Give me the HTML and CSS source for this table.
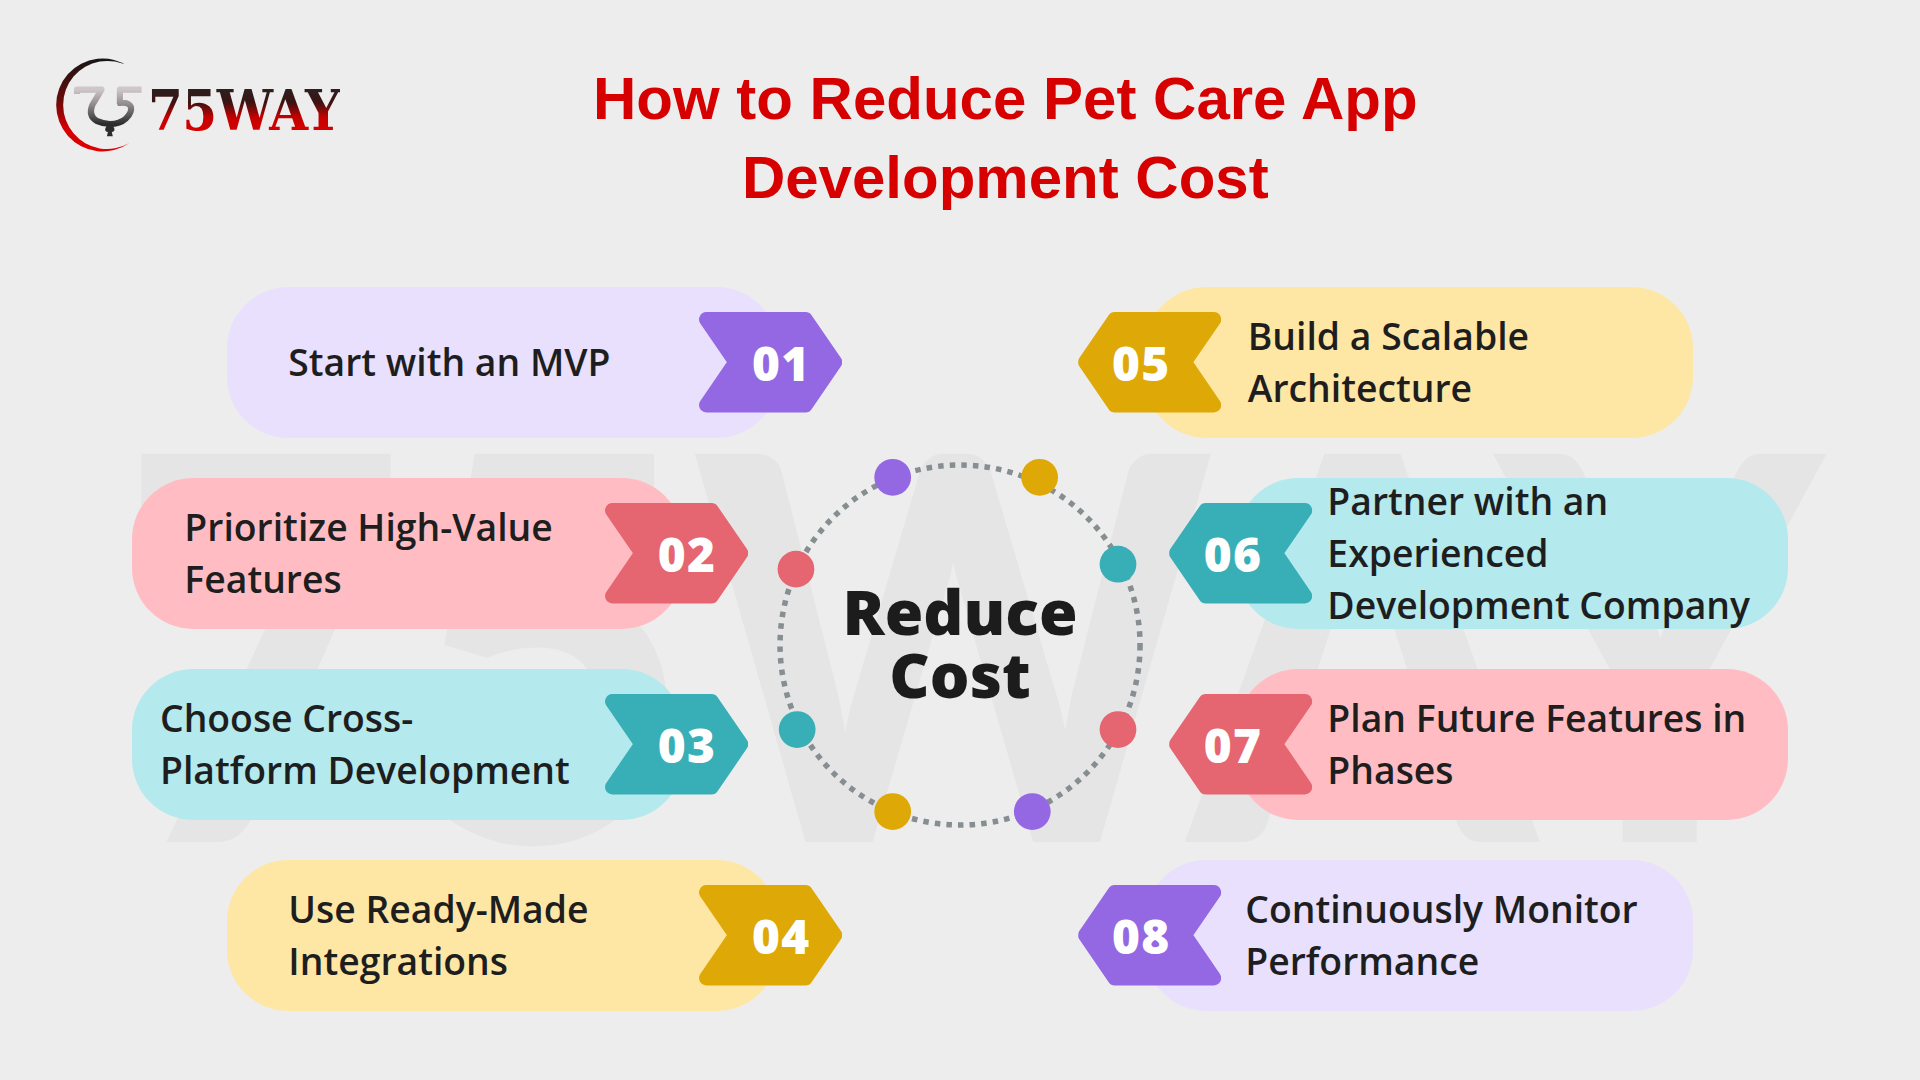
FILE: index.html
```html
<!DOCTYPE html>
<html lang="en">
<head>
<meta charset="utf-8">
<title>How to Reduce Pet Care App Development Cost</title>
<link rel="stylesheet" href="styles.css">
</head>
<body>
<div class="canvas">
  <svg class="watermark" viewBox="0 0 1568 400" width="1568" height="400" aria-hidden="true">
    <text x="98" y="388" textLength="1390" lengthAdjust="spacingAndGlyphs">75WAY</text>
  </svg>

  <header class="header">
    <div class="logo">
      <svg class="logo-mark" viewBox="0 0 76 80" width="76" height="80">
        <defs>
          <linearGradient id="ring" x1="0" y1="0" x2="0" y2="1">
            <stop offset="0" stop-color="#161616"/>
            <stop offset="0.45" stop-color="#6a0a0a"/>
            <stop offset="0.75" stop-color="#d40000"/>
            <stop offset="1" stop-color="#e00000"/>
          </linearGradient>
          <linearGradient id="emb" x1="0" y1="0" x2="0" y2="1">
            <stop offset="0" stop-color="#cfc6ca"/>
            <stop offset="0.45" stop-color="#8e888a"/>
            <stop offset="1" stop-color="#2c2c2c"/>
          </linearGradient>
        </defs>
        <path d="M60.8 8.9 A38 38 0 1 0 60.8 71.1 A36 36 0 1 1 60.8 8.9 Z" fill="url(#ring)"/>
        <path d="M18 31 V27.5 H38 L30.5 40 Q27 49 34 53 Q39.5 55.5 44.8 55.5 Q53 55.5 58 51 Q63 46 62 41.5 Q60 37.5 53 38.4 V27.5 H70.7" fill="none" stroke="url(#emb)" stroke-width="5" stroke-linejoin="round"/>
        <path d="M44.8 55 C40 58.5 40 62 43.2 62 L42.4 65.5 H47.2 L46.4 62 C49.6 62 49.6 58.5 44.8 55 Z" fill="#2c2c2c"/>
      </svg>
      <span class="logo-text">75WAY</span>
    </div>
    <h1 class="title">How to Reduce Pet Care App<br>Development Cost</h1>
  </header>

  <main class="board">
    <div class="card card-l inset r1">
      <div class="pill purple"><p class="label">Start with an MVP</p></div>
      <div class="badge">
        <svg viewBox="0 0 117 82" class="shape purple-badge"><polygon points="6,6 87,6 111,41 87,76 6,76 30,41"/></svg>
        <span class="num">01</span>
      </div>
    </div>

    <div class="card card-l outer r2">
      <div class="pill pink"><p class="label">Prioritize High-Value<br>Features</p></div>
      <div class="badge">
        <svg viewBox="0 0 117 82" class="shape red-badge"><polygon points="6,6 87,6 111,41 87,76 6,76 30,41"/></svg>
        <span class="num">02</span>
      </div>
    </div>

    <div class="card card-l outer r3">
      <div class="pill cyan"><p class="label">Choose Cross-<br>Platform Development</p></div>
      <div class="badge">
        <svg viewBox="0 0 117 82" class="shape teal-badge"><polygon points="6,6 87,6 111,41 87,76 6,76 30,41"/></svg>
        <span class="num">03</span>
      </div>
    </div>

    <div class="card card-l inset r4">
      <div class="pill yellow"><p class="label">Use Ready-Made<br>Integrations</p></div>
      <div class="badge">
        <svg viewBox="0 0 117 82" class="shape gold-badge"><polygon points="6,6 87,6 111,41 87,76 6,76 30,41"/></svg>
        <span class="num">04</span>
      </div>
    </div>

    <div class="hub">
      <svg class="hub-ring" viewBox="-165 -165 330 330" width="330" height="330">
        <circle cx="0" cy="0" r="147" fill="none" stroke="#868e91" stroke-width="4.5" stroke-dasharray="4.5 5"/>
        <circle cx="-55" cy="-137" r="15" fill="#9468e3"/>
        <circle cx="65" cy="-137" r="15" fill="#dea807"/>
        <circle cx="129" cy="-66" r="15" fill="#38afb6"/>
        <circle cx="129" cy="69" r="15" fill="#e56570"/>
        <circle cx="59" cy="136" r="15" fill="#9468e3"/>
        <circle cx="-55" cy="136" r="15" fill="#dea807"/>
        <circle cx="-133" cy="69" r="15" fill="#38afb6"/>
        <circle cx="-134" cy="-62" r="15" fill="#e56570"/>
      </svg>
      <p class="hub-text">Reduce<br>Cost</p>
    </div>

    <div class="card card-r inset r1">
      <div class="pill yellow"><p class="label">Build a Scalable<br>Architecture</p></div>
      <div class="badge">
        <svg viewBox="0 0 117 82" class="shape gold-badge"><polygon points="6,6 87,6 111,41 87,76 6,76 30,41"/></svg>
        <span class="num">05</span>
      </div>
    </div>

    <div class="card card-r outer r2">
      <div class="pill cyan"><p class="label">Partner with an<br>Experienced<br>Development Company</p></div>
      <div class="badge">
        <svg viewBox="0 0 117 82" class="shape teal-badge"><polygon points="6,6 87,6 111,41 87,76 6,76 30,41"/></svg>
        <span class="num">06</span>
      </div>
    </div>

    <div class="card card-r outer r3">
      <div class="pill pink"><p class="label">Plan Future Features in<br>Phases</p></div>
      <div class="badge">
        <svg viewBox="0 0 117 82" class="shape red-badge"><polygon points="6,6 87,6 111,41 87,76 6,76 30,41"/></svg>
        <span class="num">07</span>
      </div>
    </div>

    <div class="card card-r inset r4">
      <div class="pill purple"><p class="label">Continuously Monitor<br>Performance</p></div>
      <div class="badge">
        <svg viewBox="0 0 117 82" class="shape purple-badge"><polygon points="6,6 87,6 111,41 87,76 6,76 30,41"/></svg>
        <span class="num">08</span>
      </div>
    </div>
  </main>
</div>
</body>
</html>
```

FILE: styles.css
```css
html, body {
  margin: 0;
  padding: 0;
  background: #ededed;
  overflow: hidden;
}

.canvas {
  position: relative;
  width: 1568px;
  height: 882px;
  zoom: 1.22449;
  background: #ededed;
  overflow: hidden;
}

/* faint background wordmark */
.watermark {
  position: absolute;
  left: 0;
  top: 300px;
  display: block;
  pointer-events: none;
}

.watermark text {
  font-family: "Lato", "Open Sans", sans-serif;
  font-weight: 900;
  font-size: 437px;
  fill: #e5e5e5;
}

/* header */
.header {
  position: relative;
  display: flex;
  align-items: flex-start;
  height: 234px;
  box-sizing: border-box;
  padding: 46px 0 0 45px;
}

.logo {
  display: flex;
  align-items: flex-start;
  width: 240px;
  flex: none;
}

.logo-mark {
  display: block;
  flex: none;
}

.logo-text {
  display: inline-block;
  margin-top: 22px;
  font-family: "DejaVu Serif", "Liberation Serif", serif;
  font-weight: 700;
  font-size: 45px;
  line-height: 45px;
  letter-spacing: -0.5px;
  transform: scaleX(0.91);
  transform-origin: left center;
  background: linear-gradient(180deg, #262626 0%, #3a1212 35%, #c40000 62%, #e00000 100%);
  -webkit-background-clip: text;
  background-clip: text;
  color: transparent;
}

.title {
  margin: 2px 0 0 176px;
  width: 720px;
  flex: none;
  text-align: center;
  font-family: "Liberation Sans", Arial, sans-serif;
  font-weight: 700;
  font-size: 49px;
  line-height: 65px;
  color: #d70000;
}

/* board */
.board {
  position: relative;
  display: grid;
  grid-template-columns: 580px 192px 580px;
  grid-template-rows: repeat(4, 124px);
  row-gap: 32px;
  padding-left: 108px;
}

.r1 { grid-row: 1; }
.r2 { grid-row: 2; }
.r3 { grid-row: 3; }
.r4 { grid-row: 4; }

.card {
  display: flex;
  align-items: center;
  width: 503px;
  height: 124px;
}

.card-l { grid-column: 1; }
.card-r { grid-column: 3; flex-direction: row-reverse; }

.card-l.inset { justify-self: end; }
.card-l.outer { justify-self: start; }
.card-r.inset { justify-self: start; }
.card-r.outer { justify-self: end; }

.pill {
  flex: none;
  box-sizing: border-box;
  width: 450px;
  height: 124px;
  border-radius: 50px;
  display: flex;
  align-items: center;
}

.card-l .pill {
  justify-content: center;
  padding-right: 64px;
}

.card-r .pill {
  width: 448px;
  justify-content: flex-start;
  padding-left: 84px;
}

.card-r.outer .pill {
  width: 450px;
  padding-left: 74px;
}

.card-r.inset.r4 .pill {
  padding-left: 82px;
}

.purple { background: #e9e0fe; }
.pink { background: #ffbdc3; }
.cyan { background: #b4e9ed; }
.yellow { background: #fee7a4; }

.label {
  margin: 0;
  font-family: "Open Sans", "Noto Sans", sans-serif;
  font-weight: 600;
  font-size: 30.5px;
  line-height: 42.5px;
  color: #1e1e1e;
  white-space: nowrap;
}

.card-l.outer.r3 .label {
  margin-left: -6px;
}

.card-l.inset.r1 .label {
  margin-right: 22px;
}

.card-l.inset.r4 .label {
  margin-right: 40px;
}

.badge {
  flex: none;
  position: relative;
  width: 117px;
  height: 82px;
  display: grid;
  margin-left: -64px;
}

.card-r .badge {
  margin-left: 0;
  margin-right: -62px;
}

.shape {
  grid-area: 1 / 1;
  width: 117px;
  height: 82px;
  display: block;
}

.shape polygon {
  stroke-width: 12;
  stroke-linejoin: round;
}

.card-r .shape {
  transform: scaleX(-1);
}

.purple-badge polygon { fill: #9468e3; stroke: #9468e3; }
.red-badge polygon { fill: #e56570; stroke: #e56570; }
.teal-badge polygon { fill: #38afb6; stroke: #38afb6; }
.gold-badge polygon { fill: #dea807; stroke: #dea807; }

.num {
  position: relative;
  grid-area: 1 / 1;
  align-self: center;
  justify-self: center;
  padding-left: 17px;
  font-family: "Open Sans", "Noto Sans", sans-serif;
  font-weight: 800;
  font-size: 39px;
  line-height: 1;
  letter-spacing: 1px;
  color: #ffffff;
}

.card-r .num {
  padding-left: 0;
  padding-right: 13px;
}

/* central hub */
.hub {
  grid-column: 2;
  grid-row: 2 / span 2;
  width: 330px;
  height: 330px;
  margin: -28px -69px -22px -69px;
  display: grid;
}

.hub-ring {
  grid-area: 1 / 1;
  display: block;
}

.hub-text {
  grid-area: 1 / 1;
  place-self: center;
  margin: 0;
  padding-bottom: 4px;
  text-align: center;
  font-family: "Open Sans", "Noto Sans", sans-serif;
  font-weight: 800;
  font-size: 51px;
  line-height: 51px;
  color: #1c1c1c;
}
```
